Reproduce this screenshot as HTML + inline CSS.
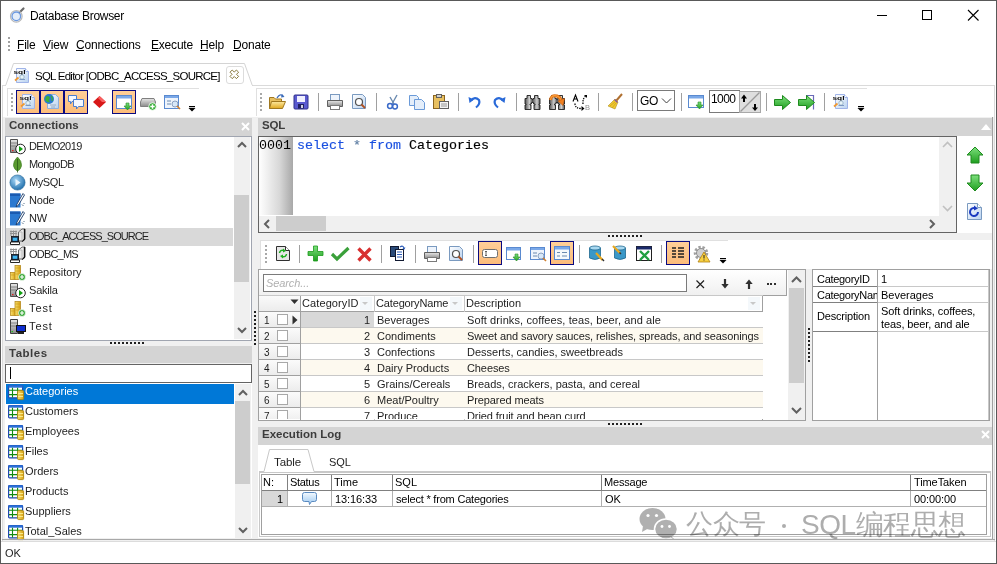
<!DOCTYPE html>
<html><head><meta charset="utf-8">
<style>
*{margin:0;padding:0;box-sizing:border-box}
html,body{width:997px;height:564px;overflow:hidden;background:#fff}
body{position:relative;font-family:"Liberation Sans",sans-serif;font-size:11px;color:#000}
.a{position:absolute}
svg.a{overflow:visible}
.t{position:absolute;white-space:nowrap;line-height:1}
.hdr{position:absolute;background:#d4d4d4;height:18px}
.hdr b{position:absolute;left:4px;top:3px;font-size:12px;color:#3c3c3c;font-weight:bold;letter-spacing:-0.2px}
.box{position:absolute;border:1px solid #828790;background:#fff}
.mn{position:absolute;top:39px;font-size:12px;line-height:1;white-space:nowrap;color:#000;letter-spacing:-0.2px}
.mn u{text-decoration:none;border-bottom:1px solid #000;display:inline-block;line-height:10px}
.btn{position:absolute;top:90px;width:24px;height:24px;border:1px solid #0a0a80;background:linear-gradient(#ffcf98,#fcbc7a)}
.sep{position:absolute;top:93px;width:1px;height:18px;background:#a0a0a0}
.dots{position:absolute;width:2px;background:repeating-linear-gradient(#909090 0 2px,transparent 2px 4px)}
</style></head><body>
<!-- window border -->
<div class="a" style="left:0;top:0;width:997px;height:564px;border:1px solid #595959"></div>
<!-- title icon -->
<svg class="a" style="left:0;top:0" width="30" height="30">
 <line x1="19.5" y1="12.5" x2="23.5" y2="8.5" stroke="#6a6a6a" stroke-width="2.2" stroke-linecap="round"/>
 <circle cx="16.3" cy="16.3" r="5.8" fill="none" stroke="#b8b8b8" stroke-width="1.2"/>
 <circle cx="16.3" cy="16.3" r="4.3" fill="#e4edf9" stroke="#6a98e0" stroke-width="1.3"/>
</svg>
<div class="t" style="left:30px;top:10px;font-size:12px;color:#000;letter-spacing:-0.3px">Database Browser</div>
<!-- window controls -->
<div class="a" style="left:877px;top:15px;width:10px;height:1px;background:#000"></div>
<div class="a" style="left:922px;top:10px;width:10px;height:10px;border:1px solid #000"></div>
<svg class="a" style="left:966px;top:8px" width="14" height="14"><path d="M2 2L12.5 12.5M12.5 2L2 12.5" stroke="#000" stroke-width="1.1"/></svg>

<!-- menu -->
<div class="dots" style="left:8px;top:37px;height:14px;background:repeating-linear-gradient(#a0a0a0 0 2px,transparent 2px 4px)"></div>
<div class="mn" style="left:17px"><u>F</u>ile</div>
<div class="mn" style="left:43px"><u>V</u>iew</div>
<div class="mn" style="left:76px"><u>C</u>onnections</div>
<div class="mn" style="left:151px"><u>E</u>xecute</div>
<div class="mn" style="left:200px"><u>H</u>elp</div>
<div class="mn" style="left:233px"><u>D</u>onate</div>

<!-- tab page bg -->
<div class="a" style="left:2px;top:85px;width:993px;height:456px;background:#f0f0f0;border:1px solid #dadada;border-bottom:none"></div>
<!-- tab -->
<svg class="a" style="left:0;top:60px" width="260" height="28">
 <path d="M5.5 26 L13.5 3.5 L244.5 3.5 L252.5 26" fill="#fff" stroke="#d4d4d4"/>
 <rect x="6" y="25" width="246" height="3" fill="#fff"/>
</svg>
<div class="t" style="left:35px;top:71px;font-size:11.5px;letter-spacing:-0.75px">SQL Editor [ODBC_ACCESS_SOURCE]</div>
<div class="a" style="left:226px;top:66px;width:18px;height:18px;border:1px solid #dcdcdc;border-radius:3px;background:#fff"></div>
<svg class="a" style="left:226px;top:66px" width="18" height="18"><path d="M4 6.2L6.2 4L8.3 6.1L10.4 4L12.6 6.2L10.5 8.3L12.6 10.4L10.4 12.6L8.3 10.5L6.2 12.6L4 10.4L6.1 8.3Z" fill="#fff" stroke="#7a6a28" stroke-width="0.9" stroke-linejoin="round"/></svg>
<svg class="a" style="left:13px;top:67px" width="17" height="17"><use href="#sqlico"/></svg>

<!-- toolbars -->
<div class="a" style="left:3px;top:86px;width:991px;height:31px;background:#fff"></div>
<div class="a" style="left:7px;top:88px;width:249px;height:29px;background:#fff"></div>
<div class="a" style="left:7px;top:88px;width:192px;height:1px;background:#e0e0e0"></div>
<div class="a" style="left:7px;top:88px;width:1px;height:28px;background:#e0e0e0"></div>
<div class="a" style="left:256px;top:88px;width:738px;height:29px;background:#fff"></div>
<div class="a" style="left:256px;top:88px;width:611px;height:1px;background:#e0e0e0"></div>
<div class="a" style="left:256px;top:88px;width:1px;height:28px;background:#e0e0e0"></div>


<!-- defs -->
<svg width="0" height="0" style="position:absolute">
 <defs>
  <linearGradient id="gPage" x1="0" y1="0" x2="1" y2="1"><stop offset="0" stop-color="#ffffff"/><stop offset="1" stop-color="#b9d2f0"/></linearGradient>
  <linearGradient id="gGreen" x1="0" y1="0" x2="0" y2="1"><stop offset="0" stop-color="#7ee07e"/><stop offset="1" stop-color="#1e9e1e"/></linearGradient>
  <linearGradient id="gFolder" x1="0" y1="0" x2="0" y2="1"><stop offset="0" stop-color="#fde9a0"/><stop offset="1" stop-color="#e0a820"/></linearGradient>
  <linearGradient id="gGray" x1="0" y1="0" x2="0" y2="1"><stop offset="0" stop-color="#e8e8e8"/><stop offset="1" stop-color="#8a8a8a"/></linearGradient>
  <symbol id="sqlico" viewBox="0 0 17 17">
   <path d="M3.5 1.5H12.5L15.5 4.5V15.5H3.5Z" fill="url(#gPage)" stroke="#a0b4e8"/>
   <path d="M12.5 1.5V4.5H15.5" fill="#fff" stroke="#a0b4e8"/>
   <path d="M1 3.5H12.5V6.5H1Z" fill="#fff" opacity="0.7"/>
   <text x="0.5" y="6.6" font-family="Liberation Sans" font-size="6.2" font-weight="bold" fill="#000" textLength="12" lengthAdjust="spacingAndGlyphs">sql</text>
   <path d="M2 13.5L5.5 10.5" stroke="#f09830" stroke-width="1.8"/>
   <circle cx="9" cy="10" r="2.2" fill="#e8f4f8" stroke="#8aa8c0" stroke-width="0.8"/>
   <path d="M6.5 12.5H12" stroke="#6a88b8" stroke-width="0.8"/>
  </symbol>
 </defs>
</svg>
<!-- left toolbar content -->
<div class="dots" style="left:11px;top:93px;height:18px;background:repeating-linear-gradient(#a8a8a8 0 2px,transparent 2px 4px)"></div>
<div class="btn" style="left:16px"></div>
<div class="btn" style="left:40px"></div>
<div class="btn" style="left:64px"></div>
<div class="btn" style="left:112px"></div>
<svg class="a" style="left:19px;top:93px" width="17" height="17"><use href="#sqlico"/></svg>
<svg class="a" style="left:43px;top:93px" width="17" height="17">
 <path d="M4.5 1.5H12.5L15.5 4.5V15.5H4.5Z" fill="url(#gPage)" stroke="#8fb0dc"/>
 <circle cx="6" cy="6" r="5" fill="#2a7ad0"/><path d="M3 3.5Q6 2 7 5Q5 7 7 9Q4 10 2 7Z" fill="#3cae3c"/><path d="M8 3Q10 5 9 8" stroke="#3cae3c" stroke-width="1.2" fill="none"/>
 <path d="M7 12H13M8 14H12" stroke="#8aa0b8" stroke-width="0.8"/>
</svg>
<svg class="a" style="left:66px;top:93px" width="20" height="18">
 <path d="M2.5 2.5H10.5V8.5H6L4.5 11V8.5H2.5Z" fill="#f4f8ff" stroke="#4a7ed0"/>
 <path d="M7.5 6.5H17.5V13.5H12.5L10.5 16V13.5H7.5Z" fill="#f4f8ff" stroke="#4a7ed0"/>
</svg>
<svg class="a" style="left:92px;top:95px" width="16" height="14">
 <path d="M7.5 1L14 7L7.5 13L1 7Z" fill="#d81818"/><path d="M7.5 1L14 7L10 7L6 3Z" fill="#f86060"/>
</svg>
<svg class="a" style="left:115px;top:94px" width="18" height="17">
 <rect x="1.5" y="1.5" width="15" height="13" fill="#fff" stroke="#5a8ad0"/>
 <rect x="2" y="2" width="14" height="2.5" fill="#7aa8e8"/>
 <path d="M11 9V12H9L12.5 16L16 12H14V9Z" fill="url(#gGreen)" stroke="#2a8a2a" stroke-width="0.6"/>
</svg>
<svg class="a" style="left:139px;top:96px" width="19" height="15">
 <path d="M3 2.5H15L16.5 6V10.5H1.5V6Z" fill="url(#gGray)" stroke="#808080"/>
 <circle cx="13.5" cy="10.5" r="3.8" fill="#3cb03c" stroke="#fff" stroke-width="0.8"/>
 <path d="M13.5 8.3V12.7M11.3 10.5H15.7" stroke="#fff" stroke-width="1.4"/>
</svg>
<svg class="a" style="left:163px;top:94px" width="19" height="17">
 <rect x="1.5" y="1.5" width="14" height="13" fill="#eef4fc" stroke="#5a8ad0"/>
 <rect x="2" y="2" width="13" height="2" fill="#7aa8e8"/>
 <path d="M4 7H8M4 10H8" stroke="#6a8ab0" stroke-width="1"/>
 <circle cx="12" cy="10" r="3" fill="#d8e8f8" stroke="#8aa0c0" stroke-width="1"/>
 <path d="M14 12L17 15" stroke="#d08030" stroke-width="1.6"/>
</svg>
<svg class="a" style="left:189px;top:105px" width="7" height="7"><rect x="0" y="1" width="6" height="1.2" fill="#000"/><path d="M-0.5 3H6.5L3 6.5Z" fill="#000"/></svg>

<!-- right toolbar content -->
<div class="dots" style="left:260px;top:93px;height:18px;background:repeating-linear-gradient(#a8a8a8 0 2px,transparent 2px 4px)"></div>
<svg class="a" style="left:268px;top:93px" width="19" height="17">
 <path d="M1.5 4.5H6L7.5 6H13.5V15.5H1.5Z" fill="#e8c060" stroke="#a07820"/>
 <path d="M3.5 8.5H17.5L14.5 15.5H1.5Z" fill="url(#gFolder)" stroke="#a07820"/>
 <path d="M9 5Q12 0 15 3" stroke="#3a6ab8" stroke-width="1.3" fill="none"/><path d="M14 1L16.5 4L13 4.5Z" fill="#3a6ab8"/>
</svg>
<svg class="a" style="left:293px;top:94px" width="16" height="16">
 <rect x="1" y="1" width="14" height="14" rx="1" fill="#5a5ad0" stroke="#30308a"/>
 <rect x="4" y="2" width="8" height="6" fill="#f0f0ff"/>
 <rect x="5" y="10" width="6" height="4.5" fill="#202060"/><rect x="8" y="11" width="2" height="3" fill="#d0d0e0"/>
</svg>
<div class="sep" style="left:318px"></div>
<svg class="a" style="left:326px;top:93px" width="18" height="18">
 <rect x="4.5" y="1.5" width="9" height="6" fill="#eef4fc" stroke="#7a9ac0"/>
 <path d="M1.5 7.5H16.5V13.5H1.5Z" fill="url(#gGray)" stroke="#606060"/>
 <rect x="4.5" y="12.5" width="9" height="4" fill="#fff" stroke="#7a7a7a"/>
</svg>
<svg class="a" style="left:351px;top:93px" width="17" height="18">
 <path d="M1.5 1.5H11.5L14.5 4.5V15.5H1.5Z" fill="url(#gPage)" stroke="#7a9ac0"/>
 <circle cx="8" cy="9" r="3.5" fill="#fff" stroke="#505050" stroke-width="1.2"/>
 <path d="M10.5 11.5L14 15" stroke="#b05020" stroke-width="1.8"/>
</svg>
<div class="sep" style="left:376px"></div>
<svg class="a" style="left:386px;top:94px" width="14" height="16">
 <path d="M11 1L6 10M4 3L8 10" stroke="#6a8ab0" stroke-width="1.4"/>
 <circle cx="4" cy="12" r="2.4" fill="none" stroke="#3a6ac8" stroke-width="1.5"/>
 <circle cx="9" cy="12.5" r="2.4" fill="none" stroke="#3a6ac8" stroke-width="1.5"/>
</svg>
<svg class="a" style="left:408px;top:94px" width="18" height="17">
 <path d="M1.5 1.5H8.5L10.5 3.5V11.5H1.5Z" fill="#e4eefa" stroke="#6a9ad8"/>
 <path d="M6.5 5.5H13.5L16.5 8.5V15.5H6.5Z" fill="#e4eefa" stroke="#6a9ad8"/>
</svg>
<svg class="a" style="left:432px;top:93px" width="18" height="18">
 <rect x="1.5" y="2.5" width="11" height="13" fill="#e8c060" stroke="#8a6420"/>
 <rect x="4.5" y="1.5" width="5" height="3" fill="#d0d0d0" stroke="#606060"/>
 <rect x="7.5" y="8.5" width="9" height="7" fill="#f4f4f4" stroke="#606060"/>
 <path d="M9 11H15M9 13H15" stroke="#808080" stroke-width="0.8"/>
</svg>
<div class="sep" style="left:458px"></div>
<svg class="a" style="left:468px;top:95px" width="14" height="14">
 <path d="M3 5.5Q7 1 11 5Q12.5 9 8 12.5" stroke="#2a6ad8" stroke-width="2.2" fill="none"/>
 <path d="M0.5 2L6 4.5L1.5 8Z" fill="#2a6ad8"/>
</svg>
<svg class="a" style="left:492px;top:95px" width="14" height="14">
 <path d="M11 5.5Q7 1 3 5Q1.5 9 6 12.5" stroke="#2a6ad8" stroke-width="2.2" fill="none"/>
 <path d="M13.5 2L8 4.5L12.5 8Z" fill="#2a6ad8"/>
</svg>
<div class="sep" style="left:516px"></div>
<svg width="0" height="0" style="position:absolute"><defs>
 <linearGradient id="gBino" x1="0" y1="0" x2="1" y2="0"><stop offset="0" stop-color="#505050"/><stop offset="0.3" stop-color="#d0d0d0"/><stop offset="0.5" stop-color="#505050"/><stop offset="0.8" stop-color="#d0d0d0"/><stop offset="1" stop-color="#505050"/></linearGradient>
 <symbol id="icBino" viewBox="0 0 17 17">
  <path d="M3 1.5H6.5V4.5H8V5.5H9V4.5H10.5V1.5H14V4.5H16V10H15V11H16V15.5H10V11H11V10H9.5V8.5H7.5V10H6V11H7V15.5H1V11H2V10H1V4.5H3Z" fill="url(#gBino)" stroke="#202020" stroke-width="0.9" stroke-linejoin="round"/>
 </symbol>
</defs></svg>
<svg class="a" style="left:524px;top:94px" width="17" height="17"><use href="#icBino"/></svg>
<svg class="a" style="left:548px;top:94px" width="18" height="17">
 <use href="#icBino"/>
 <path d="M2.5 6Q3 0.5 9 2Q12 3 13.5 7" stroke="#e07010" stroke-width="3" fill="none"/>
 <path d="M2.5 6Q3 0.5 9 2Q12 3 13.5 7" stroke="#f8a040" stroke-width="1.2" fill="none"/>
 <path d="M10 7L16.5 4.5L15 11.5Z" fill="#f08020" stroke="#c05a10" stroke-width="0.6"/>
</svg>
<svg class="a" style="left:572px;top:94px" width="19" height="17">
 <path d="M1 7.5L3.5 1L6 7.5M2 5H5" stroke="#000" stroke-width="1.1" fill="none"/>
 <text x="13" y="15.5" font-family="Liberation Sans" font-size="7.5" fill="#909090">B</text>
 <path d="M3 9.5Q3 14.5 9 14.5" stroke="#000" stroke-width="1.3" stroke-dasharray="1.3 1.1" fill="none"/>
 <path d="M9.5 12L12.5 14.5L9.5 17Z" fill="#000"/>
 <path d="M11 10Q10.5 4 14 2" stroke="#000" stroke-width="1.3" stroke-dasharray="1.3 1.1" fill="none"/>
 <path d="M12 1H15V4Z" fill="#000"/>
</svg>
<div class="sep" style="left:598px"></div>
<svg class="a" style="left:607px;top:93px" width="17" height="18">
 <path d="M15 1L9 8" stroke="#b07030" stroke-width="2"/>
 <path d="M8 6L11 9L8 16L1 13Z" fill="#f0c830" stroke="#b09020" stroke-width="0.6"/>
 <path d="M7.5 6.5L10.5 9.5" stroke="#8050a0" stroke-width="1.3"/>
 <path d="M3 13L8 9M5 15L9 10" stroke="#c09818" stroke-width="0.6"/>
</svg>
<div class="sep" style="left:632px"></div>
<div class="a" style="left:637px;top:90px;width:38px;height:21px;border:1px solid #7a7a7a;background:#fff"></div>
<div class="t" style="left:640px;top:95px;font-size:12px;letter-spacing:-0.3px">GO</div>
<svg class="a" style="left:661px;top:97px" width="12" height="8"><path d="M1 1.5L5.5 6L10 1.5" stroke="#404040" stroke-width="1" fill="none"/></svg>
<div class="sep" style="left:681px"></div>
<svg class="a" style="left:687px;top:94px" width="19" height="17">
 <rect x="1.5" y="1.5" width="15" height="12" fill="#fff" stroke="#5a8ad0"/>
 <rect x="2" y="2" width="14" height="2.5" fill="#7aa8e8"/>
 <path d="M11 8V11H9L12.5 15L16 11H14V8Z" fill="url(#gGreen)" stroke="#2a8a2a" stroke-width="0.6"/>
</svg>
<div class="a" style="left:709px;top:90px;width:31px;height:23px;border:1px solid #7a7a7a;border-right:none;background:#fff"></div>
<div class="t" style="left:711px;top:93px;font-size:12px;letter-spacing:-0.6px">1000</div>
<div class="a" style="left:739px;top:91px;width:22px;height:22px;border:1px solid #a8a8a8;background:#dedede"></div>
<svg class="a" style="left:739px;top:91px" width="22" height="22">
 <path d="M1.5 20.5L20.5 1.5" stroke="#9a9a9a" stroke-width="1.2"/>
 <path d="M5 7V11" stroke="#000" stroke-width="2"/><path d="M2 7.5L5 3.5L8 7.5Z" fill="#000"/>
 <path d="M16 13V17" stroke="#000" stroke-width="2"/><path d="M13 16.5L16 20L19 16.5Z" fill="#000"/>
</svg>
<div class="sep" style="left:766px"></div>
<svg class="a" style="left:773px;top:94px" width="19" height="17">
 <path d="M1.5 5.5H9.5V1.5L17.5 8.5L9.5 15.5V11.5H1.5Z" fill="url(#gGreen)" stroke="#1e8a1e"/>
</svg>
<svg class="a" style="left:797px;top:94px" width="20" height="17">
 <path d="M9 1.5H16.5V15.5" fill="none" stroke="#6a6ab8" stroke-width="1.2"/>
 <path d="M1.5 5.5H9.5V1.5L17.5 8.5L9.5 15.5V11.5H1.5Z" fill="url(#gGreen)" stroke="#1e8a1e"/>
</svg>
<div class="sep" style="left:824px"></div>
<svg class="a" style="left:832px;top:93px" width="17" height="17"><use href="#sqlico"/></svg>
<svg class="a" style="left:858px;top:105px" width="7" height="7"><rect x="0" y="1" width="6" height="1.2" fill="#000"/><path d="M-0.5 3H6.5L3 6.5Z" fill="#000"/></svg>

<!-- Connections -->
<svg width="0" height="0" style="position:absolute">
 <defs>
  <radialGradient id="gBall" cx="0.4" cy="0.35" r="0.7"><stop offset="0" stop-color="#a8d8f8"/><stop offset="1" stop-color="#1a6aa8"/></radialGradient>
  <linearGradient id="gYel" x1="0" y1="0" x2="1" y2="0"><stop offset="0" stop-color="#f8e070"/><stop offset="1" stop-color="#d8a010"/></linearGradient>
  <symbol id="icSrvPlay" viewBox="0 0 17 17">
   <path d="M1.5 1.5H8.5V14.5H1.5Z" fill="url(#gGray)" stroke="#505050"/>
   <path d="M2 5H8M2 8H8" stroke="#707070" stroke-width="0.8"/><rect x="3" y="12" width="1.5" height="1.2" fill="#e02020"/>
   <circle cx="11.5" cy="11" r="4.8" fill="#fff" stroke="#202020"/>
   <path d="M10 8L14 11L10 14Z" fill="#10a010"/>
  </symbol>
  <symbol id="icLeaf" viewBox="0 0 17 17">
   <path d="M8.5 1Q13 5 12.5 10Q11.5 14 8.5 15Q5.5 14 4.5 10Q4 5 8.5 1Z" fill="#5a9a30" stroke="#3a7a20" stroke-width="0.6"/>
   <path d="M8.5 3V16.5" stroke="#2a5a18" stroke-width="0.8"/>
  </symbol>
  <symbol id="icBall" viewBox="0 0 17 17">
   <circle cx="8.5" cy="8.5" r="7.6" fill="url(#gBall)" stroke="#2a6a98" stroke-width="0.6"/>
   <path d="M6.5 5L11.5 8.5L6.5 12Z" fill="#e8f4fc"/>
  </symbol>
  <symbol id="icBlueDoc" viewBox="0 0 17 17">
   <path d="M1 1.5H11.5V15.5H1Z" fill="#2a78d0"/><path d="M1 1.5H11.5V4H1Z" fill="#1a5ab0"/>
   <path d="M14 1.5L8 12L7 15L9.5 13L15.5 3Z" fill="#fff" stroke="#1a3a68" stroke-width="0.9"/>
   <path d="M13 12.5L14.5 14M14.5 11L15.5 12" stroke="#305070" stroke-width="0.8"/>
  </symbol>
  <symbol id="icOdbc" viewBox="0 0 17 17">
   <path d="M1 3.5H8M1 5.5H8M2 2.5V8M4.5 2.5V8M7 2.5V8" stroke="#909090" stroke-width="1"/>
   <path d="M9.5 4L13 1H16V11L13 13H9.5Z" fill="#e8e8e8" stroke="#404040" stroke-width="0.8"/>
   <path d="M15.5 1V11.5L13 13.5" stroke="#101010" stroke-width="1.3" fill="none"/>
   <path d="M9.5 4H13V13" stroke="#b0b0b0" stroke-width="0.8" fill="none"/>
   <rect x="2.5" y="8.5" width="7" height="5.5" fill="#1a3a60" stroke="#101010" stroke-width="0.8"/>
   <rect x="3.8" y="9.8" width="4.4" height="3" fill="#40b8f0"/>
   <path d="M1.5 14H10.5V16.5H1.5Z" fill="#fff" stroke="#101010" stroke-width="0.9"/>
  </symbol>
  <symbol id="icRepo" viewBox="0 0 17 17">
   <rect x="1.5" y="8.5" width="5" height="7" fill="url(#gYel)" stroke="#b08010" stroke-width="0.7"/>
   <rect x="6" y="1.5" width="5.5" height="14" fill="url(#gYel)" stroke="#b08010" stroke-width="0.7"/>
   <path d="M6.5 4H11M6.5 7H11M6.5 10H11M2 11H6" stroke="#c89818" stroke-width="0.6"/>
   <circle cx="13" cy="13" r="3.5" fill="#38a838" stroke="#fff" stroke-width="0.7"/>
   <path d="M13 11V15M11 13H15" stroke="#fff" stroke-width="1.2"/>
  </symbol>
  <symbol id="icSrvMon" viewBox="0 0 17 17">
   <path d="M1.5 1.5H8.5V15.5H1.5Z" fill="url(#gGray)" stroke="#404040"/>
   <path d="M2 5H8M2 8H8" stroke="#707070" stroke-width="0.8"/><rect x="2.5" y="13" width="1.5" height="1.2" fill="#20c020"/>
   <rect x="7.5" y="7.5" width="9" height="6" fill="#1030d0" stroke="#101010"/>
   <rect x="9" y="14" width="6" height="2" fill="#202020"/>
  </symbol>
  <symbol id="icTbl" viewBox="0 0 17 16">
   <rect x="0.6" y="0.6" width="14" height="12.2" rx="0.8" fill="#fff" stroke="#1e4ab0" stroke-width="1.2"/>
   <rect x="0.6" y="0.3" width="14" height="2.4" fill="#2a70d8"/>
   <path d="M1 5.2H14M1 9.6H14M4.5 2.7V12.5M9.6 2.7V12.5" stroke="#108a10" stroke-width="1.1"/>
   <rect x="9.6" y="5.6" width="6" height="9" rx="1" fill="url(#gYel)" stroke="#b08a10" stroke-width="0.9"/>
   <path d="M10.2 8.5H15M10.2 11.5H15" stroke="#fff6a0" stroke-width="0.8"/>
  </symbol>
 </defs>
</svg>
<div class="hdr" style="left:5px;top:118px;width:247px"><b style="top:1px;left:4px;font-size:11.5px;letter-spacing:0px">Connections</b></div>
<svg class="a" style="left:241px;top:122px" width="9" height="9"><path d="M1 1L8 8M8 1L1 8" stroke="#fff" stroke-width="2"/></svg>
<div class="a" style="left:5px;top:136px;width:247px;height:205px;background:#fff;border:1px solid #a0a5b0"></div>
<div class="a" style="left:6px;top:228px;width:227px;height:18px;background:#d9d9d9"></div>
<div class="a" style="left:234px;top:137px;width:16px;height:202px;background:#f0f0f0"></div>
<div class="a" style="left:234px;top:195px;width:15px;height:87px;background:#cdcdcd"></div>
<svg class="a" style="left:236px;top:140px" width="12" height="10"><path d="M2 7L6 3L10 7" stroke="#606060" stroke-width="2" fill="none"/></svg>
<svg class="a" style="left:236px;top:325px" width="12" height="10"><path d="M2 3L6 7L10 3" stroke="#606060" stroke-width="2" fill="none"/></svg>
<svg class="a" style="left:9px;top:138px" width="17" height="17"><use href="#icSrvPlay"/></svg>
<div class="t" style="left:29px;top:141px;color:#1e1e1e;letter-spacing:-0.6px">DEMO2019</div>
<svg class="a" style="left:9px;top:156px" width="17" height="17"><use href="#icLeaf"/></svg>
<div class="t" style="left:29px;top:159px;color:#1e1e1e;letter-spacing:-0.55px">MongoDB</div>
<svg class="a" style="left:9px;top:174px" width="17" height="17"><use href="#icBall"/></svg>
<div class="t" style="left:29px;top:177px;color:#1e1e1e;letter-spacing:-0.4px">MySQL</div>
<svg class="a" style="left:9px;top:192px" width="17" height="17"><use href="#icBlueDoc"/></svg>
<div class="t" style="left:29px;top:195px;color:#1e1e1e;letter-spacing:-0.2px">Node</div>
<svg class="a" style="left:9px;top:210px" width="17" height="17"><use href="#icBlueDoc"/></svg>
<div class="t" style="left:29px;top:213px;color:#1e1e1e;letter-spacing:-0.3px">NW</div>
<svg class="a" style="left:9px;top:228px" width="17" height="17"><use href="#icOdbc"/></svg>
<div class="t" style="left:29px;top:231px;color:#1e1e1e;letter-spacing:-0.95px">ODBC_ACCESS_SOURCE</div>
<svg class="a" style="left:9px;top:246px" width="17" height="17"><use href="#icOdbc"/></svg>
<div class="t" style="left:29px;top:249px;color:#1e1e1e;letter-spacing:-0.8px">ODBC_MS</div>
<svg class="a" style="left:9px;top:264px" width="17" height="17"><use href="#icRepo"/></svg>
<div class="t" style="left:29px;top:267px;color:#1e1e1e;letter-spacing:0px">Repository</div>
<svg class="a" style="left:9px;top:282px" width="17" height="17"><use href="#icSrvPlay"/></svg>
<div class="t" style="left:29px;top:285px;color:#1e1e1e;letter-spacing:-0.2px">Sakila</div>
<svg class="a" style="left:9px;top:300px" width="17" height="17"><use href="#icRepo"/></svg>
<div class="t" style="left:29px;top:303px;color:#1e1e1e;letter-spacing:0.9px">Test</div>
<svg class="a" style="left:9px;top:318px" width="17" height="17"><use href="#icSrvMon"/></svg>
<div class="t" style="left:29px;top:321px;color:#1e1e1e;letter-spacing:0.9px">Test</div>

<!-- splitter dots -->
<div class="a" style="left:110px;top:342px;width:36px;height:2px;background:repeating-linear-gradient(90deg,#202020 0 2px,transparent 2px 4px)"></div>
<div class="a" style="left:254px;top:311px;width:2px;height:34px;background:repeating-linear-gradient(#202020 0 2px,transparent 2px 4px)"></div>
<!-- Tables -->
<div class="hdr" style="left:5px;top:346px;width:247px;height:17px"><b style="top:1px;left:4px;font-size:11.5px;letter-spacing:0.5px">Tables</b></div>
<div class="a" style="left:5px;top:364px;width:247px;height:19px;background:#fff;border:1px solid #646464"></div>
<div class="a" style="left:10px;top:367px;width:1px;height:12px;background:#000"></div>
<div class="a" style="left:5px;top:383px;width:247px;height:155px;background:#fff"></div>
<div class="a" style="left:6px;top:384px;width:228px;height:20px;background:#0078d7"></div>
<div class="a" style="left:235px;top:384px;width:16px;height:154px;background:#f0f0f0"></div>
<div class="a" style="left:235px;top:401px;width:15px;height:83px;background:#cdcdcd"></div>
<svg class="a" style="left:237px;top:388px" width="12" height="10"><path d="M2 7L6 3L10 7" stroke="#606060" stroke-width="2" fill="none"/></svg>
<svg class="a" style="left:237px;top:525px" width="12" height="10"><path d="M2 3L6 7L10 3" stroke="#606060" stroke-width="2" fill="none"/></svg>
<svg class="a" style="left:8px;top:385px" width="17" height="16"><use href="#icTbl"/></svg>
<div class="t" style="left:25px;top:386px;color:#fff">Categories</div>
<svg class="a" style="left:8px;top:405px" width="17" height="16"><use href="#icTbl"/></svg>
<div class="t" style="left:25px;top:406px;color:#1e1e1e">Customers</div>
<svg class="a" style="left:8px;top:425px" width="17" height="16"><use href="#icTbl"/></svg>
<div class="t" style="left:25px;top:426px;color:#1e1e1e">Employees</div>
<svg class="a" style="left:8px;top:445px" width="17" height="16"><use href="#icTbl"/></svg>
<div class="t" style="left:25px;top:446px;color:#1e1e1e">Files</div>
<svg class="a" style="left:8px;top:465px" width="17" height="16"><use href="#icTbl"/></svg>
<div class="t" style="left:25px;top:466px;color:#1e1e1e">Orders</div>
<svg class="a" style="left:8px;top:485px" width="17" height="16"><use href="#icTbl"/></svg>
<div class="t" style="left:25px;top:486px;color:#1e1e1e">Products</div>
<svg class="a" style="left:8px;top:505px" width="17" height="16"><use href="#icTbl"/></svg>
<div class="t" style="left:25px;top:506px;color:#1e1e1e">Suppliers</div>
<svg class="a" style="left:8px;top:525px" width="17" height="16"><use href="#icTbl"/></svg>
<div class="t" style="left:25px;top:526px;color:#1e1e1e">Total_Sales</div>

<!-- SQL -->
<div class="hdr" style="left:258px;top:118px;width:734px"><b style="top:1px;left:4px;font-size:11.5px">SQL</b></div>
<svg class="a" style="left:980px;top:122px" width="12" height="9"><path d="M1 8L6 2L11 8Z" fill="#fff"/></svg>
<div class="a" style="left:258px;top:136px;width:734px;height:97px;background:#fff"></div>
<div class="a" style="left:258px;top:136px;width:699px;height:97px;border:1px solid #646464"></div>
<div class="a" style="left:259px;top:137px;width:34px;height:78px;background:linear-gradient(90deg,#ffffff,#d8d8d8 60%,#a8a8a8)"></div>
<div class="t" style="left:259px;top:139px;font-family:'Liberation Mono',monospace;font-size:13.33px;color:#000">0001</div>
<div class="t" style="left:297px;top:139px;font-family:'Liberation Mono',monospace;font-size:13.33px;color:#000;-webkit-text-stroke:0.15px"><span style="color:#1a50e0">select</span> <span style="color:#5a7aa0">*</span> <span style="color:#1a50e0">from</span> Categories</div>
<div class="a" style="left:939px;top:137px;width:17px;height:79px;background:#f0f0f0"></div>
<svg class="a" style="left:941px;top:140px" width="13" height="10"><path d="M2 7L6.5 2.5L11 7" stroke="#c0c0c0" stroke-width="1.6" fill="none"/></svg>
<svg class="a" style="left:941px;top:203px" width="13" height="10"><path d="M2 3L6.5 7.5L11 3" stroke="#c0c0c0" stroke-width="1.6" fill="none"/></svg>
<div class="a" style="left:259px;top:216px;width:697px;height:16px;background:#f0f0f0"></div>
<div class="a" style="left:276px;top:216px;width:50px;height:15px;background:#cdcdcd"></div>
<svg class="a" style="left:262px;top:218px" width="10" height="12"><path d="M7 2L3 6L7 10" stroke="#606060" stroke-width="2" fill="none"/></svg>
<svg class="a" style="left:927px;top:218px" width="10" height="12"><path d="M3 2L7 6L3 10" stroke="#606060" stroke-width="2" fill="none"/></svg>
<svg class="a" style="left:966px;top:146px" width="18" height="18"><path d="M9 1L17 9H13V17H5V9H1Z" fill="url(#gGreen)" stroke="#1e8a1e"/></svg>
<svg class="a" style="left:966px;top:174px" width="18" height="18"><path d="M5 1H13V9H17L9 17L1 9H5Z" fill="url(#gGreen)" stroke="#1e8a1e"/></svg>
<svg class="a" style="left:966px;top:202px" width="17" height="18">
 <path d="M1.5 1.5H11.5L15.5 5.5V17.5H1.5Z" fill="url(#gPage)" stroke="#7a9ac0"/>
 <path d="M11.5 1.5V5.5H15.5" fill="#fff" stroke="#7a9ac0"/>
 <path d="M12 10A4 4 0 1 1 9.5 6.3" stroke="#1a3ac0" stroke-width="2" fill="none"/><path d="M8 3.5L12 6.5L8 8.5Z" fill="#1a3ac0"/>
</svg>


<!-- grid toolbar -->
<div class="a" style="left:258px;top:234px;width:734px;height:194px;background:#f0f0f0"></div>
<div class="a" style="left:261px;top:240px;width:731px;height:29px;background:#fff"></div>
<div class="a" style="left:261px;top:240px;width:467px;height:1px;background:#e0e0e0"></div>
<div class="a" style="left:260px;top:240px;width:1px;height:29px;background:#e0e0e0"></div>
<div class="dots" style="left:265px;top:245px;height:18px;background:repeating-linear-gradient(#a8a8a8 0 2px,transparent 2px 4px)"></div>
<svg class="a" style="left:275px;top:245px" width="16" height="17">
 <path d="M1.5 1.5H10.5L14.5 5.5V15.5H1.5Z" fill="#e8e8e8" stroke="#303030"/>
 <path d="M10.5 1.5V5.5H14.5" fill="#fff" stroke="#303030"/>
 <path d="M4.5 8Q5 4.5 9 5.5" stroke="#20b020" stroke-width="1.5" fill="none"/><path d="M8 3.5L11 6L8 7.5Z" fill="#20b020"/>
 <path d="M11.5 9Q11 12.5 7 11.5" stroke="#20b020" stroke-width="1.5" fill="none"/><path d="M8 13.5L5 11L8 9.5Z" fill="#20b020"/>
</svg>
<div class="sep" style="left:299px;top:245px"></div>
<svg class="a" style="left:307px;top:245px" width="18" height="18"><path d="M6.5 1H10.5V6.5H16V10.5H10.5V16H6.5V10.5H1V6.5H6.5Z" fill="url(#gGreen)" stroke="#1a9a1a" stroke-width="0.8"/></svg>
<svg class="a" style="left:331px;top:246px" width="19" height="16"><path d="M1 8L6 13L17.5 2" stroke="#3aa03a" stroke-width="3.2" fill="none"/></svg>
<svg class="a" style="left:356px;top:246px" width="17" height="17"><path d="M2.5 2.5L14.5 14.5M14.5 2.5L2.5 14.5" stroke="#d83030" stroke-width="3.4"/></svg>
<div class="sep" style="left:381px;top:245px"></div>
<svg class="a" style="left:389px;top:244px" width="18" height="18">
 <rect x="1.5" y="2.5" width="8" height="10" fill="#2a4a78" stroke="#101830"/>
 <rect x="6.5" y="5.5" width="8" height="11" fill="#fff" stroke="#101830"/>
 <path d="M8 8H13M8 10.5H13M8 13H13" stroke="#2a5ab8" stroke-width="1"/>
 <path d="M11 3Q14 1 15 4" stroke="#2a5ab8" stroke-width="1.2" fill="none"/><path d="M13.5 4L16.5 3.5L15 6Z" fill="#2a5ab8"/>
</svg>
<div class="sep" style="left:415px;top:245px"></div>
<svg class="a" style="left:423px;top:245px" width="18" height="18">
 <rect x="4.5" y="1.5" width="9" height="6" fill="#eef4fc" stroke="#7a9ac0"/>
 <path d="M1.5 7.5H16.5V13.5H1.5Z" fill="url(#gGray)" stroke="#606060"/>
 <rect x="4.5" y="12.5" width="9" height="4" fill="#fff" stroke="#7a7a7a"/>
</svg>
<svg class="a" style="left:448px;top:245px" width="17" height="18">
 <path d="M1.5 1.5H11.5L14.5 4.5V15.5H1.5Z" fill="url(#gPage)" stroke="#7a9ac0"/>
 <circle cx="8" cy="9" r="3.5" fill="#fff" stroke="#505050" stroke-width="1.2"/>
 <path d="M10.5 11.5L14 15" stroke="#b05020" stroke-width="1.8"/>
</svg>
<div class="sep" style="left:473px;top:245px"></div>
<div class="btn" style="left:478px;top:241px"></div>
<svg class="a" style="left:481px;top:246px" width="18" height="14"><rect x="1.5" y="3.5" width="15" height="8" rx="2" fill="#fff" stroke="#707070"/><path d="M5 5.5V9.5M4 5.5H6M4 9.5H6" stroke="#404040" stroke-width="0.8"/></svg>
<svg class="a" style="left:505px;top:246px" width="18" height="17">
 <rect x="1.5" y="1.5" width="14" height="12" fill="#fff" stroke="#5a8ad0"/>
 <rect x="2" y="2" width="13" height="2.5" fill="#7aa8e8"/>
 <path d="M10 8V11H8L11.5 15L15 11H13V8Z" fill="url(#gGreen)" stroke="#2a8a2a" stroke-width="0.6"/>
</svg>
<svg class="a" style="left:529px;top:246px" width="19" height="17">
 <rect x="1.5" y="1.5" width="14" height="12" fill="#eef4fc" stroke="#5a8ad0"/>
 <rect x="2" y="2" width="13" height="2" fill="#7aa8e8"/>
 <path d="M4 7H8M4 10H8" stroke="#6a8ab0" stroke-width="1"/>
 <circle cx="12" cy="10" r="3" fill="#d8e8f8" stroke="#8aa0c0" stroke-width="1"/>
 <path d="M14 12L17 15" stroke="#d08030" stroke-width="1.6"/>
</svg>
<div class="btn" style="left:550px;top:241px"></div>
<svg class="a" style="left:553px;top:245px" width="18" height="17">
 <rect x="1.5" y="1.5" width="15" height="13" fill="#f4f8fc" stroke="#5a8ad0"/>
 <rect x="2" y="2" width="14" height="2.5" fill="#7aa8e8"/>
 <path d="M4 7.5H7M4 11H7M9 7.5H14M9 11H14" stroke="#6a8ab0" stroke-width="1"/>
</svg>
<div class="sep" style="left:579px;top:245px"></div>
<svg class="a" style="left:588px;top:245px" width="17" height="17">
 <path d="M1.5 3V13Q7 16 12.5 13V3Z" fill="#3a98c8" stroke="#206890" stroke-width="0.8"/>
 <ellipse cx="7" cy="3" rx="5.5" ry="2" fill="#a8d8f0" stroke="#206890" stroke-width="0.8"/>
 <path d="M8 8L14.5 15" stroke="#e8a820" stroke-width="2.2"/><path d="M14 14L16 16" stroke="#303030" stroke-width="1.5"/>
</svg>
<svg class="a" style="left:612px;top:245px" width="17" height="17">
 <path d="M2.5 3V13Q8 16 13.5 13V3Z" fill="#3a98c8" stroke="#206890" stroke-width="0.8"/>
 <ellipse cx="8" cy="3" rx="5.5" ry="2" fill="#a8d8f0" stroke="#206890" stroke-width="0.8"/>
 <path d="M1 1L8 8" stroke="#e8a820" stroke-width="2.2"/><path d="M7.5 7.5L9 9" stroke="#303030" stroke-width="1.5"/>
</svg>
<svg class="a" style="left:635px;top:245px" width="18" height="17">
 <rect x="1.5" y="1.5" width="15" height="14" fill="#fff" stroke="#202020"/>
 <rect x="1.5" y="1.5" width="15" height="3" fill="#1a2a6a"/>
 <path d="M5 6L14 15M14 6L5 15" stroke="#20a040" stroke-width="2.4"/>
</svg>
<div class="sep" style="left:661px;top:245px"></div>
<div class="btn" style="left:666px;top:241px"></div>
<svg class="a" style="left:670px;top:246px" width="16" height="14"><path d="M2 2H6M2 5H6M2 8H6M2 11H6M8 2H14M8 5H14M8 8H14M8 11H14" stroke="#202020" stroke-width="1.4"/></svg>
<svg class="a" style="left:693px;top:245px" width="18" height="18">
 <circle cx="8" cy="8" r="5.5" fill="none" stroke="#a0a0a0" stroke-width="3.5" stroke-dasharray="2.2 1.6"/>
 <circle cx="8" cy="8" r="4.5" fill="#d0d0d0" stroke="#909090"/>
 <path d="M11 7L17 17H5Z" fill="#f8d040" stroke="#b08010" stroke-width="0.8"/><path d="M11 10V13.5M11 14.5V15.5" stroke="#202020" stroke-width="1"/>
</svg>
<svg class="a" style="left:720px;top:257px" width="7" height="7"><rect x="0" y="1" width="6" height="1.2" fill="#000"/><path d="M-0.5 3H6.5L3 6.5Z" fill="#000"/></svg>

<!-- grid -->
<div class="a" style="left:258px;top:269px;width:548px;height:152px;background:#fff;border:1px solid #a0a0a0"></div>
<div class="a" style="left:259px;top:270px;width:528px;height:26px;background:linear-gradient(#ffffff,#f0f0f0);border-bottom:1px solid #a0a0a0;border-right:1px solid #a0a0a0"></div>
<div class="a" style="left:263px;top:274px;width:424px;height:18px;background:#fff;border:1px solid #7a7a7a"></div>
<div class="t" style="left:266px;top:278px;font-style:italic;color:#b0b0b0;letter-spacing:-0.1px">Search...</div>
<svg class="a" style="left:696px;top:280px" width="9" height="9"><path d="M0.5 0.5L8 8M8 0.5L0.5 8" stroke="#202020" stroke-width="1.2"/></svg>
<svg class="a" style="left:721px;top:279px" width="8" height="10"><path d="M4 0V6" stroke="#303030" stroke-width="2.2"/><path d="M0.3 5L4 9.5L7.7 5Z" fill="#303030"/></svg>
<svg class="a" style="left:745px;top:279px" width="8" height="10"><path d="M4 4V10" stroke="#303030" stroke-width="2.2"/><path d="M0.3 5L4 0.5L7.7 5Z" fill="#303030"/></svg>
<div class="a" style="left:767px;top:283px;width:9px;height:2px;background:repeating-linear-gradient(90deg,#303030 0 2px,transparent 2px 3.5px)"></div>
<div class="a" style="left:788px;top:270px;width:17px;height:150px;background:#f0f0f0"></div>
<div class="a" style="left:789px;top:288px;width:15px;height:95px;background:#cdcdcd"></div>
<svg class="a" style="left:790px;top:275px" width="13" height="10"><path d="M2 7L6.5 2.5L11 7" stroke="#606060" stroke-width="2" fill="none"/></svg>
<svg class="a" style="left:790px;top:405px" width="13" height="10"><path d="M2 3L6.5 7.5L11 3" stroke="#606060" stroke-width="2" fill="none"/></svg>
<!-- header -->
<div class="a" style="left:259px;top:295px;width:504px;height:17px;background:#fff;border-top:1px solid #c8c8c8;border-bottom:1px solid #a0a0a0"></div>
<div class="a" style="left:259px;top:296px;width:42px;height:15px;background:linear-gradient(#fafafa,#ececec)"></div>
<svg class="a" style="left:290px;top:299px" width="9" height="6"><path d="M0.5 0.5H8.5L4.5 5Z" fill="#303030"/></svg>
<div class="a" style="left:300px;top:296px;width:1px;height:124px;background:#a0a0a0"></div>
<div class="a" style="left:374px;top:296px;width:1px;height:124px;background:#c8c8c8"></div>
<div class="a" style="left:464px;top:296px;width:1px;height:124px;background:#c8c8c8"></div>
<div class="a" style="left:762px;top:296px;width:1px;height:124px;background:#a0a0a0"></div>
<div class="t" style="left:302px;top:298px;color:#1e1e1e;letter-spacing:0.1px">CategoryID</div>
<div class="t" style="left:376px;top:298px;color:#1e1e1e;letter-spacing:-0.15px">CategoryName</div>
<div class="t" style="left:466px;top:298px;color:#1e1e1e">Description</div>
<div class="a" style="left:360px;top:297px;width:12px;height:13px;background:#f4f8fb"></div>
<div class="a" style="left:450px;top:297px;width:12px;height:13px;background:#f4f8fb"></div>
<div class="a" style="left:748px;top:297px;width:12px;height:13px;background:#f4f8fb"></div>
<svg class="a" style="left:362px;top:302px" width="7" height="4"><path d="M0 0H6L3 3Z" fill="#c8c8c8"/></svg>
<svg class="a" style="left:452px;top:302px" width="7" height="4"><path d="M0 0H6L3 3Z" fill="#c8c8c8"/></svg>
<svg class="a" style="left:750px;top:302px" width="7" height="4"><path d="M0 0H6L3 3Z" fill="#c8c8c8"/></svg>
<div class="a" style="left:259px;top:312px;width:529px;height:107px;overflow:hidden">
<div class="a" style="left:42px;top:0px;width:462px;height:16px;background:#fff;border-bottom:1px solid #c8c8c8"></div>
<div class="a" style="left:0;top:0px;width:41px;height:16px;background:linear-gradient(#fbfbfb,#ececec);border-bottom:1px solid #a0a0a0"></div>
<div class="a" style="left:18px;top:2px;width:11px;height:11px;background:#fff;border:1px solid #a8a8a8"></div>
<div class="t" style="left:5px;top:4px;font-size:10px;color:#1e1e1e">1</div>
<div class="t" style="left:44px;top:3px;width:67px;text-align:right;color:#1e1e1e">1</div>
<div class="t" style="left:118px;top:3px;color:#1e1e1e">Beverages</div>
<div class="t" style="left:208px;top:3px;color:#1e1e1e;letter-spacing:0.1px">Soft drinks, coffees, teas, beer, and ale</div>
<div class="a" style="left:42px;top:16px;width:462px;height:16px;background:#fdf9ef;border-bottom:1px solid #c8c8c8"></div>
<div class="a" style="left:0;top:16px;width:41px;height:16px;background:linear-gradient(#fbfbfb,#ececec);border-bottom:1px solid #a0a0a0"></div>
<div class="a" style="left:18px;top:18px;width:11px;height:11px;background:#fff;border:1px solid #a8a8a8"></div>
<div class="t" style="left:5px;top:20px;font-size:10px;color:#1e1e1e">2</div>
<div class="t" style="left:44px;top:19px;width:67px;text-align:right;color:#1e1e1e">2</div>
<div class="t" style="left:118px;top:19px;color:#1e1e1e">Condiments</div>
<div class="t" style="left:208px;top:19px;color:#1e1e1e;letter-spacing:-0.1px">Sweet and savory sauces, relishes, spreads, and seasonings</div>
<div class="a" style="left:42px;top:32px;width:462px;height:16px;background:#fff;border-bottom:1px solid #c8c8c8"></div>
<div class="a" style="left:0;top:32px;width:41px;height:16px;background:linear-gradient(#fbfbfb,#ececec);border-bottom:1px solid #a0a0a0"></div>
<div class="a" style="left:18px;top:34px;width:11px;height:11px;background:#fff;border:1px solid #a8a8a8"></div>
<div class="t" style="left:5px;top:36px;font-size:10px;color:#1e1e1e">3</div>
<div class="t" style="left:44px;top:35px;width:67px;text-align:right;color:#1e1e1e">3</div>
<div class="t" style="left:118px;top:35px;color:#1e1e1e">Confections</div>
<div class="t" style="left:208px;top:35px;color:#1e1e1e;letter-spacing:0px">Desserts, candies, sweetbreads</div>
<div class="a" style="left:42px;top:48px;width:462px;height:16px;background:#fdf9ef;border-bottom:1px solid #c8c8c8"></div>
<div class="a" style="left:0;top:48px;width:41px;height:16px;background:linear-gradient(#fbfbfb,#ececec);border-bottom:1px solid #a0a0a0"></div>
<div class="a" style="left:18px;top:50px;width:11px;height:11px;background:#fff;border:1px solid #a8a8a8"></div>
<div class="t" style="left:5px;top:52px;font-size:10px;color:#1e1e1e">4</div>
<div class="t" style="left:44px;top:51px;width:67px;text-align:right;color:#1e1e1e">4</div>
<div class="t" style="left:118px;top:51px;color:#1e1e1e">Dairy Products</div>
<div class="t" style="left:208px;top:51px;color:#1e1e1e;letter-spacing:-0.1px">Cheeses</div>
<div class="a" style="left:42px;top:64px;width:462px;height:16px;background:#fff;border-bottom:1px solid #c8c8c8"></div>
<div class="a" style="left:0;top:64px;width:41px;height:16px;background:linear-gradient(#fbfbfb,#ececec);border-bottom:1px solid #a0a0a0"></div>
<div class="a" style="left:18px;top:66px;width:11px;height:11px;background:#fff;border:1px solid #a8a8a8"></div>
<div class="t" style="left:5px;top:68px;font-size:10px;color:#1e1e1e">5</div>
<div class="t" style="left:44px;top:67px;width:67px;text-align:right;color:#1e1e1e">5</div>
<div class="t" style="left:118px;top:67px;color:#1e1e1e">Grains/Cereals</div>
<div class="t" style="left:208px;top:67px;color:#1e1e1e;letter-spacing:0px">Breads, crackers, pasta, and cereal</div>
<div class="a" style="left:42px;top:80px;width:462px;height:16px;background:#fdf9ef;border-bottom:1px solid #c8c8c8"></div>
<div class="a" style="left:0;top:80px;width:41px;height:16px;background:linear-gradient(#fbfbfb,#ececec);border-bottom:1px solid #a0a0a0"></div>
<div class="a" style="left:18px;top:82px;width:11px;height:11px;background:#fff;border:1px solid #a8a8a8"></div>
<div class="t" style="left:5px;top:84px;font-size:10px;color:#1e1e1e">6</div>
<div class="t" style="left:44px;top:83px;width:67px;text-align:right;color:#1e1e1e">6</div>
<div class="t" style="left:118px;top:83px;color:#1e1e1e">Meat/Poultry</div>
<div class="t" style="left:208px;top:83px;color:#1e1e1e;letter-spacing:-0.1px">Prepared meats</div>
<div class="a" style="left:42px;top:96px;width:462px;height:16px;background:#fff;border-bottom:1px solid #c8c8c8"></div>
<div class="a" style="left:0;top:96px;width:41px;height:16px;background:linear-gradient(#fbfbfb,#ececec);border-bottom:1px solid #a0a0a0"></div>
<div class="a" style="left:18px;top:98px;width:11px;height:11px;background:#fff;border:1px solid #a8a8a8"></div>
<div class="t" style="left:5px;top:100px;font-size:10px;color:#1e1e1e">7</div>
<div class="t" style="left:44px;top:99px;width:67px;text-align:right;color:#1e1e1e">7</div>
<div class="t" style="left:118px;top:99px;color:#1e1e1e">Produce</div>
<div class="t" style="left:208px;top:99px;color:#1e1e1e;letter-spacing:-0.1px">Dried fruit and bean curd</div>
<div class="a" style="left:42px;top:0px;width:73px;height:16px;background:#d8d8d8;border-bottom:1px solid #c8c8c8"></div>
<div class="t" style="left:44px;top:3px;width:67px;text-align:right;color:#1e1e1e">1</div>
<svg class="a" style="left:33px;top:3px" width="6" height="10"><path d="M0.5 0.5L5.5 5L0.5 9.5Z" fill="#303030"/></svg>
</div>
<div class="a" style="left:608px;top:423px;width:34px;height:2px;background:repeating-linear-gradient(90deg,#202020 0 2px,transparent 2px 4px)"></div>
<div class="a" style="left:808px;top:328px;width:2px;height:34px;background:repeating-linear-gradient(#202020 0 2px,transparent 2px 4px)"></div>
<div class="a" style="left:608px;top:235px;width:34px;height:2px;background:repeating-linear-gradient(90deg,#202020 0 2px,transparent 2px 4px)"></div>
<!-- record view -->
<div class="a" style="left:812px;top:269px;width:178px;height:152px;background:#fff;border:1px solid #a0a0a0"></div>
<div class="a" style="left:877px;top:270px;width:1px;height:150px;background:#a0a0a0"></div>
<div class="a" style="left:813px;top:286px;width:64px;height:1px;background:#808080"></div>
<div class="a" style="left:813px;top:302px;width:64px;height:1px;background:#808080"></div>
<div class="a" style="left:813px;top:331px;width:64px;height:1px;background:#808080"></div>
<div class="a" style="left:878px;top:286px;width:110px;height:1px;background:#c8c8c8"></div>
<div class="a" style="left:878px;top:302px;width:110px;height:1px;background:#c8c8c8"></div>
<div class="a" style="left:878px;top:331px;width:110px;height:1px;background:#c8c8c8"></div>
<div class="a" style="left:988px;top:270px;width:1px;height:150px;background:#c8c8c8"></div>
<div class="t" style="left:817px;top:274px;letter-spacing:-0.3px">CategoryID</div>
<div class="a" style="left:813px;top:287px;width:64px;height:15px;overflow:hidden"><div class="t" style="left:4px;top:3px;letter-spacing:-0.3px">CategoryName</div></div>
<div class="t" style="left:817px;top:311px;letter-spacing:-0.2px">Description</div>
<div class="t" style="left:881px;top:274px">1</div>
<div class="t" style="left:881px;top:290px">Beverages</div>
<div class="t" style="left:881px;top:306px;letter-spacing:-0.1px">Soft drinks, coffees,</div>
<div class="t" style="left:881px;top:319px;letter-spacing:-0.1px">teas, beer, and ale</div>

<!-- exec log -->
<div class="hdr" style="left:258px;top:427px;width:734px;height:18px"><b style="top:1px;left:4px;font-size:11.5px;letter-spacing:0px">Execution Log</b></div>
<svg class="a" style="left:981px;top:430px" width="9" height="9"><path d="M1 1L8 8M8 1L1 8" stroke="#fff" stroke-width="2"/></svg>
<div class="a" style="left:258px;top:445px;width:734px;height:93px;background:#fff"></div>
<svg class="a" style="left:258px;top:446px" width="734" height="28">
 <path d="M1 25.5H6L11.5 3.5H50L56 25.5H733" fill="none" stroke="#c8c8c8"/>
</svg>
<div class="t" style="left:274px;top:457px;font-size:11.5px;color:#1e1e1e;letter-spacing:-0.1px">Table</div>
<div class="t" style="left:329px;top:457px;font-size:11px;color:#1e1e1e;letter-spacing:-0.1px">SQL</div>
<div class="a" style="left:259px;top:472px;width:732px;height:65px;border:1px solid #c8c8c8;background:#fff"></div>
<div class="a" style="left:261px;top:474px;width:726px;height:61px;border:1px solid #a0a0a0;background:#fff"></div>
<div class="a" style="left:262px;top:490px;width:724px;height:1px;background:#808080"></div>
<div class="a" style="left:262px;top:506px;width:724px;height:1px;background:#b0b0b0"></div>
<div class="a" style="left:262px;top:491px;width:25px;height:15px;background:#d8d8d8"></div>
<div class="a" style="left:287px;top:475px;width:1px;height:15px;background:#808080"></div>
<div class="a" style="left:287px;top:491px;width:1px;height:15px;background:#b0b0b0"></div>
<div class="a" style="left:331px;top:475px;width:1px;height:15px;background:#808080"></div>
<div class="a" style="left:331px;top:491px;width:1px;height:15px;background:#b0b0b0"></div>
<div class="a" style="left:392px;top:475px;width:1px;height:15px;background:#808080"></div>
<div class="a" style="left:392px;top:491px;width:1px;height:15px;background:#b0b0b0"></div>
<div class="a" style="left:601px;top:475px;width:1px;height:15px;background:#808080"></div>
<div class="a" style="left:601px;top:491px;width:1px;height:15px;background:#b0b0b0"></div>
<div class="a" style="left:910px;top:475px;width:1px;height:15px;background:#808080"></div>
<div class="a" style="left:910px;top:491px;width:1px;height:15px;background:#b0b0b0"></div>
<div class="t" style="left:263px;top:477px">N:</div>
<div class="t" style="left:290px;top:477px;letter-spacing:-0.3px">Status</div>
<div class="t" style="left:334px;top:477px">Time</div>
<div class="t" style="left:395px;top:477px">SQL</div>
<div class="t" style="left:604px;top:477px;letter-spacing:-0.2px">Message</div>
<div class="t" style="left:914px;top:477px;letter-spacing:-0.1px">TimeTaken</div>
<div class="t" style="left:277px;top:494px">1</div>
<svg class="a" style="left:301px;top:491px" width="17" height="15">
 <defs><linearGradient id="gBub" x1="0" y1="0" x2="0" y2="1"><stop offset="0" stop-color="#f4faff"/><stop offset="1" stop-color="#9cc8f0"/></linearGradient></defs>
 <path d="M3.5 1.5H13.5Q15.5 1.5 15.5 3.5V8.5Q15.5 10.5 13.5 10.5H10.5L8.5 13.5L8 10.5H3.5Q1.5 10.5 1.5 8.5V3.5Q1.5 1.5 3.5 1.5Z" fill="url(#gBub)" stroke="#5a8ac0"/>
</svg>
<div class="t" style="left:335px;top:494px;letter-spacing:-0.1px">13:16:33</div>
<div class="t" style="left:396px;top:494px;letter-spacing:-0.2px">select * from Categories</div>
<div class="t" style="left:605px;top:494px">OK</div>
<div class="t" style="left:914px;top:494px;letter-spacing:-0.1px">00:00:00</div>
<!-- watermark -->
<svg class="a" style="left:638px;top:507px;mix-blend-mode:multiply" width="42" height="34">
 <ellipse cx="14.5" cy="12" rx="13" ry="11" fill="#b0b0b0"/>
 <path d="M5 19L4 25L11 21Z" fill="#b0b0b0"/>
 <ellipse cx="28" cy="22" rx="11.5" ry="10" fill="#b0b0b0" stroke="#fff" stroke-width="1.5"/>
 <path d="M33 29L37 33L32 30Z" fill="#b0b0b0"/>
 <circle cx="10" cy="8.5" r="1.6" fill="#fff"/><circle cx="18.5" cy="8.5" r="1.6" fill="#fff"/>
 <circle cx="24" cy="19.5" r="1.4" fill="#fff"/><circle cx="31.5" cy="19.5" r="1.4" fill="#fff"/>
</svg>
<div class="t" style="left:686px;top:511px;font-size:27px;letter-spacing:-0.5px;color:#adadad;mix-blend-mode:multiply">公众号</div>
<div class="a" style="left:782px;top:524px;width:4px;height:4px;border-radius:2px;background:#adadad"></div>
<div class="t" style="left:801px;top:511px;font-size:28px;color:#adadad;mix-blend-mode:multiply;letter-spacing:-0.5px">SQL编程思想</div>

<div class="a" style="left:992px;top:117px;width:1px;height:422px;background:#a0a0a0"></div>
<!-- status bar -->
<div class="a" style="left:2px;top:539px;width:993px;height:1px;background:#a8a8a8"></div>
<div class="a" style="left:1px;top:541px;width:995px;height:1px;background:#dcdcdc"></div>
<div class="t" style="left:5px;top:548px;font-size:11px;color:#1e1e1e">OK</div>
</body></html>
